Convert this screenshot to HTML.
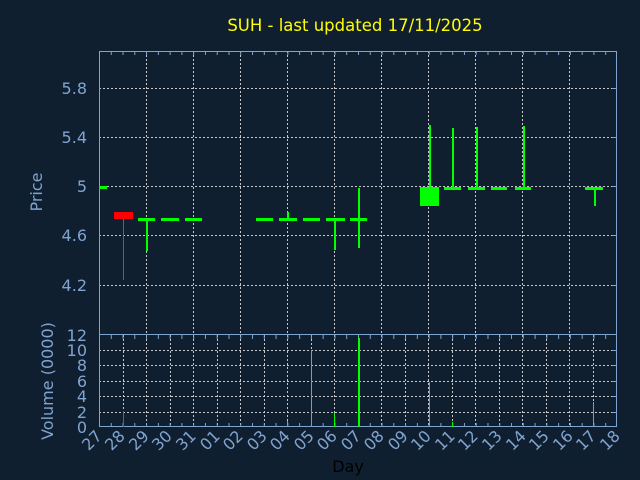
<!DOCTYPE html>
<html><head><meta charset="utf-8"><style>
html,body{margin:0;padding:0;background:#0f1f30;}
svg{display:block}
text{font-family:"DejaVu Sans","Liberation Sans",sans-serif;}
</style></head><body>
<svg width="640" height="480" viewBox="0 0 640 480" xmlns="http://www.w3.org/2000/svg" shape-rendering="crispEdges">
<defs>
<pattern id="tk" x="99" y="0" width="23.545" height="480" patternUnits="userSpaceOnUse">
<rect x="0" y="0" width="1" height="480" fill="#80a4d0"/>
<rect x="11.77" y="0" width="1" height="480" fill="#80a4d0"/>
</pattern>
</defs>
<rect width="640" height="480" fill="#0f1f30"/>
<text x="355" y="31" fill="#ffff00" font-size="16.5" text-anchor="middle">SUH - last updated 17/11/2025</text>
<g stroke="#c8c8c8" stroke-width="1" stroke-dasharray="2,2" fill="none">
<path d="M99 88.5H617M99 137.5H617M99 186.5H617M99 235.5H617M99 285.5H617"/>
<path d="M146.5 51V334M193.5 51V334M240.5 51V334M287.5 51V334M334.5 51V334M381.5 51V334M428.5 51V334M475.5 51V334M522.5 51V334M569.5 51V334"/>
</g>
<g stroke="#c8c8c8" stroke-width="1" stroke-dasharray="2,2" fill="none">
<path d="M99 350.5H617M99 365.5H617M99 381.5H617M99 396.5H617M99 412.5H617"/>
<path d="M123.5 335V427M146.5 335V427M170.5 335V427M193.5 335V427M217.5 335V427M240.5 335V427M264.5 335V427M287.5 335V427M311.5 335V427M334.5 335V427M358.5 335V427M381.5 335V427M405.5 335V427M428.5 335V427M452.5 335V427M475.5 335V427M499.5 335V427M522.5 335V427M546.5 335V427M569.5 335V427M593.5 335V427"/>
</g>
<rect x="99" y="51" width="518" height="4" fill="url(#tk)"/>
<rect x="99" y="335" width="518" height="4" fill="url(#tk)"/>
<rect x="99" y="423" width="518" height="4" fill="url(#tk)"/>
<g stroke="#80a4d0" stroke-width="1" fill="none">
<rect x="99.5" y="51.5" width="517" height="283"/>
<rect x="99.5" y="334.5" width="517" height="92"/>
<path d="M612 88.5H617M612 137.5H617M612 186.5H617M612 235.5H617M612 285.5H617"/>
<path d="M612 350.5H617M612 365.5H617M612 381.5H617M612 396.5H617M612 412.5H617"/>
</g>
<g fill="#00ff00">
<rect x="99" y="186" width="8" height="3"/>
<rect x="123" y="219" width="1" height="61" fill="#ff2020"/>
<rect x="114" y="212" width="19" height="7" fill="#ff0000"/>
<rect x="146" y="218" width="2" height="33"/><rect x="138" y="218" width="17" height="3"/>
<rect x="161" y="218" width="18" height="3"/>
<rect x="185" y="218" width="17" height="3"/>
<rect x="256" y="218" width="17" height="3"/>
<rect x="287" y="212" width="2" height="7"/><rect x="279" y="218" width="18" height="3"/>
<rect x="303" y="218" width="17" height="3"/>
<rect x="334" y="219" width="2" height="31"/><rect x="326" y="218" width="19" height="3"/>
<rect x="358" y="188" width="2" height="60"/><rect x="350" y="218" width="17" height="3"/>
<rect x="429" y="125" width="2" height="62"/><rect x="420" y="187" width="19" height="19"/>
<rect x="452" y="128" width="2" height="60"/><rect x="444" y="187" width="17" height="3"/>
<rect x="476" y="127" width="2" height="61"/><rect x="468" y="187" width="17" height="3"/>
<rect x="491" y="187" width="16" height="3"/>
<rect x="523" y="126" width="2" height="62"/><rect x="515" y="187" width="16" height="3"/>
<rect x="594" y="187" width="2" height="19"/><rect x="585" y="187" width="18" height="3"/>
</g>
<g fill="#00ff00">
<rect x="123" y="411" width="1" height="16" fill="#ff2020"/>
<rect x="287" y="421" width="1" height="6"/>
<rect x="311" y="350" width="1" height="77"/>
<rect x="334" y="413" width="1" height="14"/>
<rect x="358" y="338" width="2" height="89"/>
<rect x="429" y="382" width="1" height="45"/>
<rect x="452" y="422" width="1" height="5"/>
<rect x="593" y="402" width="1" height="25"/>
</g>
<g fill="#80a4d0" font-size="16" text-anchor="end">
<text x="87" y="94">5.8</text><text x="87" y="143">5.4</text><text x="87" y="192">5</text>
<text x="87" y="241">4.6</text><text x="87" y="291">4.2</text>
<text x="87" y="341">12</text><text x="87" y="356">10</text><text x="87" y="371">8</text>
<text x="87" y="387">6</text><text x="87" y="402">4</text><text x="87" y="418">2</text><text x="87" y="433">0</text>
</g>
<text transform="translate(42 192) rotate(-90)" fill="#80a4d0" font-size="16" text-anchor="middle">Price</text>
<text transform="translate(53 381) rotate(-90)" fill="#80a4d0" font-size="16" text-anchor="middle">Volume (0000)</text>
<g fill="#80a4d0" font-size="16" text-anchor="end">
<text transform="translate(103 437) rotate(-45)">27</text>
<text transform="translate(126 437) rotate(-45)">28</text>
<text transform="translate(150 437) rotate(-45)">29</text>
<text transform="translate(173 437) rotate(-45)">30</text>
<text transform="translate(197 437) rotate(-45)">31</text>
<text transform="translate(221 437) rotate(-45)">01</text>
<text transform="translate(244 437) rotate(-45)">02</text>
<text transform="translate(268 437) rotate(-45)">03</text>
<text transform="translate(291 437) rotate(-45)">04</text>
<text transform="translate(315 437) rotate(-45)">05</text>
<text transform="translate(338 437) rotate(-45)">06</text>
<text transform="translate(362 437) rotate(-45)">07</text>
<text transform="translate(385 437) rotate(-45)">08</text>
<text transform="translate(409 437) rotate(-45)">09</text>
<text transform="translate(432 437) rotate(-45)">10</text>
<text transform="translate(456 437) rotate(-45)">11</text>
<text transform="translate(479 437) rotate(-45)">12</text>
<text transform="translate(503 437) rotate(-45)">13</text>
<text transform="translate(527 437) rotate(-45)">14</text>
<text transform="translate(550 437) rotate(-45)">15</text>
<text transform="translate(574 437) rotate(-45)">16</text>
<text transform="translate(597 437) rotate(-45)">17</text>
<text transform="translate(621 437) rotate(-45)">18</text>
</g>
<text x="348" y="472" fill="#000000" font-size="16" text-anchor="middle">Day</text>
</svg>
</body></html>
